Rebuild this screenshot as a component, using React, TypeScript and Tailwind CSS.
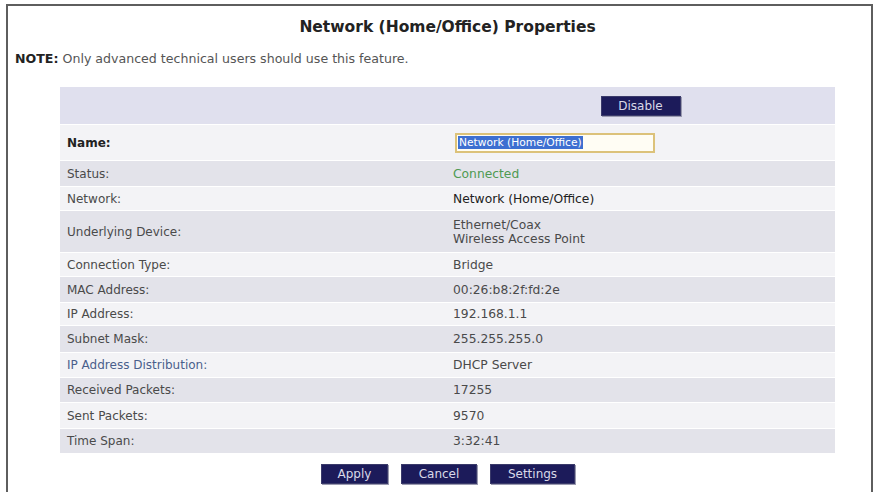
import React from 'react';

type Row = {
  label: string;
  value: React.ReactNode;
  h: string;
  shade: boolean;
  labelClass?: string;
  valueClass?: string;
};

const rows: Row[] = [
  { label: 'Status:', value: 'Connected', h: 'h-[26px]', shade: true, valueClass: 'text-[#4f9a52]' },
  { label: 'Network:', value: 'Network (Home/Office)', h: 'h-[24px]', shade: false, valueClass: 'text-[#222]' },
  {
    label: 'Underlying Device:',
    value: (
      <>
        <div>Ethernet/Coax</div>
        <div>Wireless Access Point</div>
      </>
    ),
    h: 'h-[42px]',
    shade: true,
  },
  { label: 'Connection Type:', value: 'Bridge', h: 'h-[24px]', shade: false },
  { label: 'MAC Address:', value: '00:26:b8:2f:fd:2e', h: 'h-[26px]', shade: true },
  { label: 'IP Address:', value: '192.168.1.1', h: 'h-[23px]', shade: false },
  { label: 'Subnet Mask:', value: '255.255.255.0', h: 'h-[27px]', shade: true },
  { label: 'IP Address Distribution:', value: 'DHCP Server', h: 'h-[25px]', shade: false, labelClass: 'text-[#4a5f8c]' },
  { label: 'Received Packets:', value: '17255', h: 'h-[25px]', shade: true },
  { label: 'Sent Packets:', value: '9570', h: 'h-[26px]', shade: false },
  { label: 'Time Span:', value: '3:32:41', h: 'h-[25px]', shade: true },
];

function NavyButton({ children, w }: { children: React.ReactNode; w: string }) {
  return (
    <button
      className={`${w} h-[20px] bg-[#1c1b5a] border border-[#3a3a6a] text-[#d9d9e8] text-[12px] leading-none shadow-[1px_1px_0_#9a9ab0]`}
    >
      {children}
    </button>
  );
}

export default function App() {
  return (
    <div className="w-[876px] h-[492px] bg-white overflow-hidden pt-[4px] pl-[6px] font-['DejaVu_Sans',Verdana,sans-serif]">
      <div className="w-[867px] h-[500px] border-2 border-[#5e5e5e] bg-white">
        {/* title + note */}
        <div className="ml-[52px] w-[775px] pt-[12px] text-center text-[15.5px] font-bold text-[#222] leading-[19px]">
          Network (Home/Office) Properties
        </div>
        <p className="mt-[14px] ml-[7px] text-[12.6px] leading-[15px] text-[#555]">
          <span className="font-bold text-[#222]">NOTE:</span> Only advanced technical users should use this feature.
        </p>

        <div className="ml-[52px] mt-[21px] w-[775px]">
          <div className="flex h-[37px] bg-[#e0e0ee]">
            <div className="w-[386px]" />
            <div className="flex-1 flex items-center justify-center">
              <NavyButton w="w-[80px]">Disable</NavyButton>
            </div>
          </div>

          <div className="flex h-[36px] bg-[#f3f3f6] border-t border-white">
            <div className="w-[386px] flex items-center pl-[7px] text-[12px] font-bold text-[#222]">Name:</div>
            <div className="flex-1 flex items-center pl-[9px]">
              <div className="w-[200px] h-[20px] border-2 border-[#dcc27a] bg-[#fffdf4] flex items-center pl-[1px]">
                <span className="bg-[#3d6fd1] text-white text-[10.7px] leading-[13px] px-[1px]">Network (Home/Office)</span>
              </div>
            </div>
          </div>

          {rows.map((r) => (
            <div key={r.label} className={`flex ${r.h} border-t border-white ${r.shade ? 'bg-[#e3e3ea]' : 'bg-[#f3f3f6]'}`}>
              <div className={`w-[386px] flex items-center pl-[7px] text-[12px] ${r.labelClass ?? 'text-[#4a4a4a]'}`}>
                {r.label}
              </div>
              <div
                className={`flex-1 flex flex-col justify-center pl-[7px] text-[12.3px] leading-[14px] ${r.valueClass ?? 'text-[#4a4a4a]'}`}
              >
                {r.value}
              </div>
            </div>
          ))}

          <div className="flex justify-center gap-[13px] mt-[11px] pl-[1px]">
            <NavyButton w="w-[67px]">Apply</NavyButton>
            <NavyButton w="w-[76px]">Cancel</NavyButton>
            <NavyButton w="w-[85px]">Settings</NavyButton>
          </div>
        </div>
      </div>
    </div>
  );
}
